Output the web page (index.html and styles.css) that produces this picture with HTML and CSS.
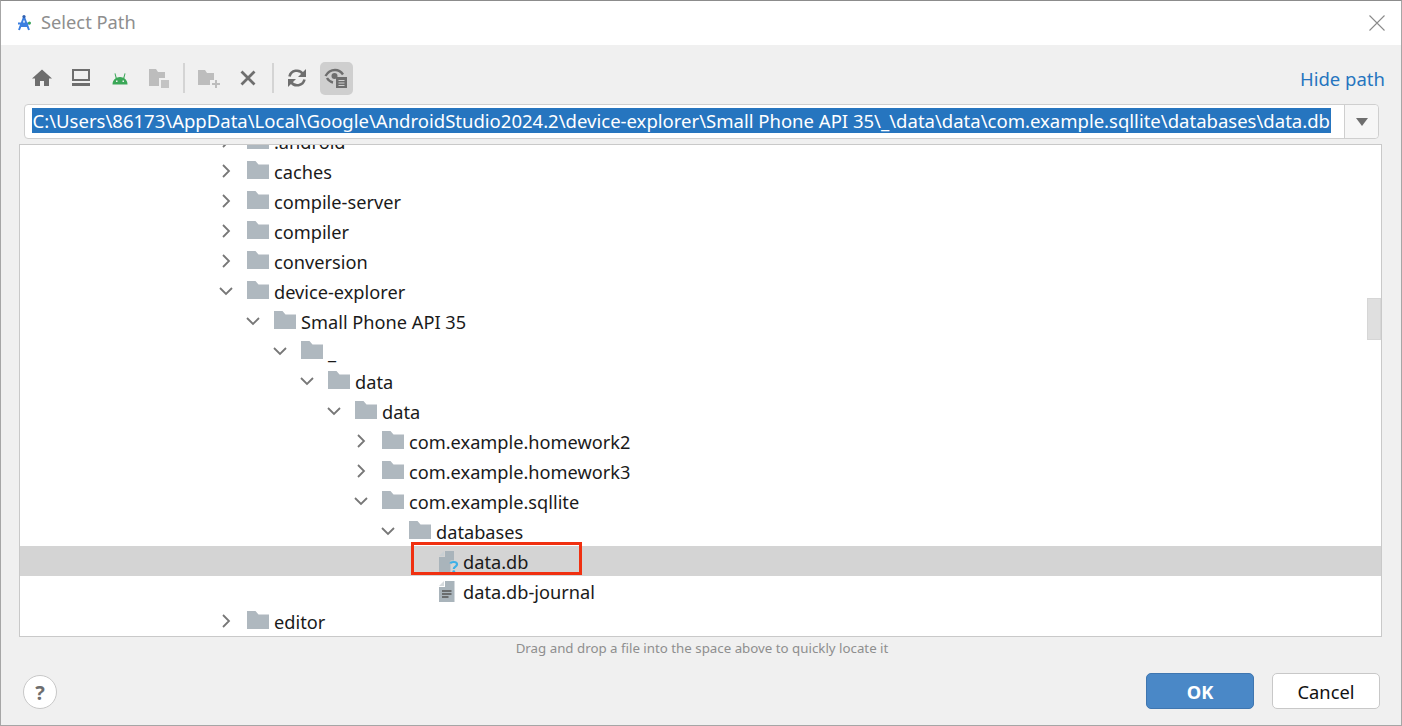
FILE: index.html
```html
<!DOCTYPE html>
<html lang="en">
<head>
<meta charset="utf-8">
<title>Select Path</title>
<link rel="stylesheet" href="styles.css">
</head>
<body>
<svg class="defs" width="0" height="0" aria-hidden="true">
  <defs>
    <symbol id="folder" viewBox="0 0 22 18"><path fill="#afb8bf" d="M0 0h8.500l3 3.500H22V18H0z"/></symbol>
    <symbol id="open" viewBox="0 0 14 14"><path fill="none" stroke="#777" stroke-width="1.800" d="M1 4l6 6 6-6"/></symbol>
    <symbol id="closed" viewBox="0 0 14 14"><path fill="none" stroke="#777" stroke-width="1.800" d="M4 1l6 6-6 6"/></symbol>
  </defs>
</svg>
<div class="dialog">
  <header class="titlebar">
    <div class="title-left">
      <svg class="app" width="16" height="18" viewBox="0 0 16 18"><path fill="none" stroke="#3b7fe0" stroke-width="2" d="M8 3L3 16M8 3l5 13M2 9.500h12"/><circle cx="8" cy="2.600" r="1.600" fill="#2f5fb0"/><path fill="#3b7fe0" d="M5.500 9h5l2 4H3.500z"/><circle cx="13.500" cy="9" r="1.500" fill="#3aa35b"/></svg>
      <span class="title">Select Path</span>
    </div>
    <svg class="close" width="16" height="16" viewBox="0 0 16 16"><path stroke="#8a8a8a" stroke-width="1.100" d="M.5.5l15 15M15.500.5l-15 15"/></svg>
  </header>
  <main class="content">
    <div class="toolbar">
      <div class="tools">
        <span class="tool"><svg width="20" height="18" viewBox="0 0 20 18"><path fill="#6e6e6e" d="M10 .5L0 9.500h3V17h5v-5h4v5h5V9.500h3z"/></svg></span>
        <span class="tool"><svg width="18" height="18" viewBox="0 0 18 18"><path fill="#6e6e6e" fill-rule="evenodd" d="M0 0h18v12H0zm2 2v8h14V2zM0 14h18v3H0z"/></svg></span>
        <span class="tool"><svg width="16" height="13" viewBox="0 0 16 13"><path fill="#3aa757" fill-rule="evenodd" d="M.5 12.500a7.500 7.500 0 0 1 3.200-6.200L2.500 1.500l.9-.3 1.300 4.500a7.600 7.600 0 0 1 6.600 0l1.300-4.500.9.300-1.200 4.800a7.500 7.500 0 0 1 3.200 6.200zM4 8.500v1.500h1.500V8.500zm6.500 0v1.500H12V8.500z"/></svg></span>
        <span class="tool"><svg width="20" height="19" viewBox="0 0 20 19"><path fill="#bdbdbd" d="M0 0h7l2 3h7v6h-6v8H0z"/><path fill="#c4c4c4" d="M12 11h8v8h-8z"/></svg></span>
        <span class="sep"></span>
        <span class="tool"><svg width="22" height="19" viewBox="0 0 22 19"><path fill="#bdbdbd" d="M0 1h7l2 3h7v7h-4v5H0z"/><path fill="#bdbdbd" d="M17 11h2v3h3v2h-3v3h-2v-3h-3v-2h3z"/></svg></span>
        <span class="tool"><svg width="16" height="16" viewBox="0 0 16 16"><path stroke="#6e6e6e" stroke-width="2.800" d="M1.500 1.500l13 13M14.500 1.500l-13 13"/></svg></span>
        <span class="sep"></span>
        <span class="tool"><svg width="20" height="20" viewBox="0 0 20 20"><path fill="none" stroke="#6e6e6e" stroke-width="2.600" d="M2.500 8.500A7.500 7.500 0 0 1 16 6M17.500 11.500A7.500 7.500 0 0 1 4 14"/><path fill="#6e6e6e" d="M19 1v8h-8zM1 19v-8h8z"/></svg></span>
        <span class="tool tool-on"><svg width="24" height="22" viewBox="0 0 24 22"><path fill="none" stroke="#6e6e6e" stroke-width="2.400" d="M1.500 9C4 4.500 8 3 11 3s6 1.500 8 4.500M3 11c1.500 2.500 3.500 4 6 4.500"/><circle cx="10.500" cy="9" r="3" fill="#6e6e6e"/><path fill="#6e6e6e" d="M12 10h11v11H12z"/><path stroke="#cfcfcf" stroke-width="1.200" d="M14.500 13.500h6M14.500 16h6M14.500 18.500h6"/></svg></span>
      </div>
      <a class="hide-path">Hide path</a>
    </div>
    <div class="path-row">
      <div class="path-input"><span class="selected">C:\Users\86173\AppData\Local\Google\AndroidStudio2024.2\device-explorer\Small Phone API 35\_\data\data\com.example.sqllite\databases\data.db</span></div>
      <div class="path-drop"><span class="caret"></span></div>
    </div>
    <div class="tree-box">
      <ul class="tree">
        <li class="row d8"><svg class="arrow"><use href="#closed"/></svg><svg class="folder"><use href="#folder"/></svg><span>.android</span></li>
        <li class="row d8"><svg class="arrow"><use href="#closed"/></svg><svg class="folder"><use href="#folder"/></svg><span>caches</span></li>
        <li class="row d8"><svg class="arrow"><use href="#closed"/></svg><svg class="folder"><use href="#folder"/></svg><span>compile-server</span></li>
        <li class="row d8"><svg class="arrow"><use href="#closed"/></svg><svg class="folder"><use href="#folder"/></svg><span>compiler</span></li>
        <li class="row d8"><svg class="arrow"><use href="#closed"/></svg><svg class="folder"><use href="#folder"/></svg><span>conversion</span></li>
        <li class="row d8"><svg class="arrow"><use href="#open"/></svg><svg class="folder"><use href="#folder"/></svg><span>device-explorer</span></li>
        <li class="row d9"><svg class="arrow"><use href="#open"/></svg><svg class="folder"><use href="#folder"/></svg><span>Small Phone API 35</span></li>
        <li class="row d10"><svg class="arrow"><use href="#open"/></svg><svg class="folder"><use href="#folder"/></svg><span>_</span></li>
        <li class="row d11"><svg class="arrow"><use href="#open"/></svg><svg class="folder"><use href="#folder"/></svg><span>data</span></li>
        <li class="row d12"><svg class="arrow"><use href="#open"/></svg><svg class="folder"><use href="#folder"/></svg><span>data</span></li>
        <li class="row d13"><svg class="arrow"><use href="#closed"/></svg><svg class="folder"><use href="#folder"/></svg><span>com.example.homework2</span></li>
        <li class="row d13"><svg class="arrow"><use href="#closed"/></svg><svg class="folder"><use href="#folder"/></svg><span>com.example.homework3</span></li>
        <li class="row d13"><svg class="arrow"><use href="#open"/></svg><svg class="folder"><use href="#folder"/></svg><span>com.example.sqllite</span></li>
        <li class="row d14"><svg class="arrow"><use href="#open"/></svg><svg class="folder"><use href="#folder"/></svg><span>databases</span></li>
        <li class="row d15 file picked">
          <svg class="fileicon" width="20" height="22" viewBox="0 0 20 22"><path fill="#a9b4bb" d="M6 0h9v9.500h-3.500V22H0V6h6z"/><path fill="#c9d0d4" d="M5 0L0 5h5z"/><path fill="none" stroke="#3fb0e6" stroke-width="2.200" d="M11.500 12.500c.6-2 6.500-2.200 6.500.8 0 2.400-3.200 2.200-3.200 4.700"/><circle cx="14.800" cy="20.600" r="1.400" fill="#3fb0e6"/></svg>
          <span>data.db</span>
        </li>
        <li class="row d15 file">
          <svg class="fileicon" width="20" height="22" viewBox="0 0 20 22"><path fill="#a9b4bb" d="M6 0h9.500v21H0V6h6z"/><path fill="#d5dadd" d="M5 0L0 5h5z"/><path stroke="#555" stroke-width="1.300" d="M3 10h9.500M3 13h9.500M3 16h6.500"/></svg>
          <span>data.db-journal</span>
        </li>
        <li class="row d8"><svg class="arrow"><use href="#closed"/></svg><svg class="folder"><use href="#folder"/></svg><span>editor</span></li>
      </ul>
      <div class="thumb"></div>
      <div class="redbox"></div>
    </div>
    <p class="hint">Drag and drop a file into the space above to quickly locate it</p>
    <footer class="footer">
      <span class="help">?</span>
      <div class="buttons">
        <button class="btn ok">OK</button>
        <button class="btn cancel">Cancel</button>
      </div>
    </footer>
  </main>
</div>
</body>
</html>
```
FILE: styles.css
```css
* { box-sizing: border-box; }
html, body { margin: 0; padding: 0; height: 100%; overflow: hidden; }
body { font-family: "Noto Sans", "Open Sans", sans-serif; background: #f0f0f0; }
.defs { display: block; height: 0; }
.dialog { width: 1402px; height: 726px; display: flex; flex-direction: column; border: 1px solid #a6a6a6; border-top-color: #8c8c8c; }
.titlebar { height: 44px; background: #fff; display: flex; align-items: center; justify-content: space-between; padding: 0 16px 0 15px; flex: none; }
.title-left { display: flex; align-items: center; gap: 9px; }
.title { font-size: 18.300px; color: #8e8e8e; line-height: 24px; margin-top: -2px; }
.content { flex: 1; display: flex; flex-direction: column; padding: 0 18px; min-height: 0; }
.toolbar { height: 59px; padding-top: 16px; flex: none; display: flex; justify-content: space-between; align-items: flex-start; }
.tools { display: flex; align-items: center; height: 34px; margin-left: 6.500px; gap: 6px; }
.tool { width: 33px; height: 33px; display: flex; align-items: center; justify-content: center; flex: none; }
.tool-on { background: #cfcfcf; border-radius: 5px; }
.sep { width: 2px; height: 30px; background: #d4d4d4; margin: 0 1px 0 1.500px; }
.hide-path { font-size: 18.500px; color: #2675bf; margin-top: 6px; margin-right: -2px; line-height: 24px; }
.path-row { height: 35px; flex: none; display: flex; margin: 0 4px 0 5px; background: #fff; border: 1.500px solid #cfcfcf; border-radius: 4px; }
.path-input { flex: 1; min-width: 0; padding: 2.500px 0 0 6.500px; font-size: 18.530px; line-height: 25px; white-space: nowrap; overflow: hidden; border-right: 1px solid #cfcfcf; }
.selected { background: #2675bf; color: #fff; display: inline-block; padding: 0 1px; }
.path-drop { width: 33px; flex: none; display: flex; align-items: center; justify-content: center; background: #f6f6f6; border-radius: 0 4px 4px 0; }
.caret { border-left: 6.500px solid transparent; border-right: 6.500px solid transparent; border-top: 8px solid #6e6e6e; }
.tree-box { position: relative; height: 493px; margin: 5px 1px 0 0; flex: none; background: #fff; border: 1px solid #c9c9c9; overflow: hidden; }
.tree { list-style: none; margin: -19px 0 0; padding: 0; }
.row { height: 30px; display: flex; align-items: center; font-size: 18.200px; color: #1a1a1a; white-space: nowrap; }
.row span { padding-top: 2px; }
.arrow { width: 14px; height: 14px; margin-right: 14px; margin-bottom: 1px; flex: none; }
.folder { width: 22px; height: 18px; margin-right: 5px; margin-top: -2px; flex: none; }
.fileicon { margin-right: 4px; margin-top: 1px; flex: none; }
.d8 { padding-left: 199px; }
.d9 { padding-left: 226px; }
.d10 { padding-left: 253px; }
.d11 { padding-left: 280px; }
.d12 { padding-left: 307px; }
.d13 { padding-left: 334px; }
.d14 { padding-left: 361px; }
.d15 { padding-left: 419px; }
.picked { background: #d4d4d4; }
.thumb { position: absolute; right: 0; top: 153px; width: 14px; height: 42px; background: #dfdfdf; border: 1.500px solid #d6d6d6; }
.redbox { position: absolute; left: 391px; top: 397px; width: 171px; height: 33px; border: 3px solid #f03010; }
.hint { margin: 1px 0 0; height: 21px; line-height: 20px; text-align: center; font-size: 13.300px; color: #8e8e8e; flex: none; padding-left: 2px; }
.footer { flex: 1; display: flex; align-items: center; justify-content: space-between; padding: 0 4px; }
.help { width: 34px; height: 34px; border-radius: 50%; border: 1.500px solid #c8c8c8; background: #fff; display: flex; align-items: center; justify-content: center; font-size: 20px; font-weight: 700; color: #6e6e6e; }
.buttons { display: flex; gap: 18px; margin: -3px -1px 0 0; }
.btn { width: 108px; height: 36px; border-radius: 5px; font-family: inherit; font-size: 18.300px; padding: 2px 0 0; }
.ok { background: #4a88c7; border: 1px solid #3f76b0; color: #fff; font-weight: 700; }
.cancel { background: #fff; border: 1.500px solid #c8c8c8; color: #111; }
```
